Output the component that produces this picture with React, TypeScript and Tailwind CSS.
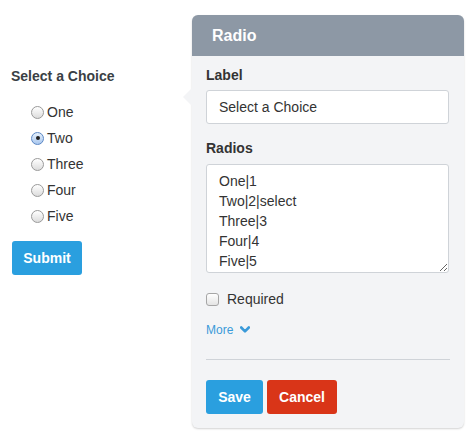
import { useState } from "react";

const options = ["One", "Two", "Three", "Four", "Five"];

function Radio({ checked }: { checked: boolean }) {
  return checked ? (
    <span className="flex h-[13px] w-[13px] items-center justify-center rounded-full border border-[#5b87c4] bg-gradient-to-b from-[#e6f0fb] to-[#a9c7ee]">
      <span className="h-[4px] w-[4px] rounded-full bg-[#1f1f1f]" />
    </span>
  ) : (
    <span className="h-[13px] w-[13px] rounded-full border border-[#9a9a9a] bg-gradient-to-b from-white to-[#dcdcdc]" />
  );
}

export default function App() {
  const [selected, setSelected] = useState("Two");

  return (
    <div
      className="flex items-start pt-[15px] text-[#333] bg-white w-[473px] h-[442px]"
      style={{ fontFamily: '"Liberation Sans", Arial, sans-serif' }}
    >
      {/* Preview */}
      <div className="w-[192px] pl-[11px] pt-[51px]">
        <div className="text-[14px] font-bold leading-[20px] text-[#3a3f45]">Select a Choice</div>
        <div className="mt-[13px] pl-[20px]">
          {options.map((o) => (
            <div
              key={o}
              onClick={() => setSelected(o)}
              className="flex h-[26px] items-center gap-[3px] text-[14px] cursor-pointer"
            >
              <Radio checked={selected === o} />
              <span>{o}</span>
            </div>
          ))}
        </div>
        <button className="ml-[1px] mt-[12px] h-[34px] w-[70px] rounded-[3px] bg-[#2a9fdf] text-[14px] font-bold text-white">
          Submit
        </button>
      </div>

      {/* Editor panel */}
      <div className="relative w-[272px] rounded-[6px] bg-[#f3f4f6] shadow-[0_1px_2px_rgba(0,0,0,0.18)]">
        <span className="absolute left-[-9px] top-[73px] h-0 w-0 border-y-[9px] border-r-[9px] border-y-transparent border-r-[#f3f4f6]" />
        <div className="flex h-[41px] items-center rounded-t-[6px] bg-[#8d98a5] pl-[20px] text-[16px] font-bold text-white">
          Radio
        </div>
        <div className="px-[14px] pb-[14px] pt-[9px]">
          <div className="text-[14px] font-bold leading-[20px]">Label</div>
          <input
            defaultValue="Select a Choice"
            className="mt-[5px] h-[34px] w-[243px] rounded-[3px] border border-[#cfd3d8] bg-white px-[12px] text-[14px] text-[#333] outline-none"
          />
          <div className="mt-[14px] text-[14px] font-bold leading-[20px]">Radios</div>
          <textarea
            defaultValue={"One|1\nTwo|2|select\nThree|3\nFour|4\nFive|5"}
            className="mt-[6px] block h-[109px] w-[243px] resize-y rounded-[3px] border border-[#cfd3d8] bg-white px-[12px] pt-[6px] text-[14px] leading-[20px] text-[#333] outline-none"
          />
          <label className="mt-[19px] flex items-center gap-[8px] text-[14px] leading-[14px]">
            <span className="h-[13px] w-[13px] rounded-[3px] border border-[#a6a6a6] bg-gradient-to-b from-white to-[#e4e4e4]" />
            Required
          </label>
          <div className="mt-[17px] flex items-center gap-[7px] text-[12px] leading-[14px] text-[#3a9ad9]">
            More
            <svg width="10" height="8" viewBox="0 0 10 8" fill="none">
              <path d="M1.2 1.5 5 5.3 8.8 1.5" stroke="#3a9ad9" strokeWidth="2.6" strokeLinecap="round" strokeLinejoin="round" />
            </svg>
          </div>
          <div className="mt-[22px] border-t border-[#cfd3d8]" />
          <div className="mt-[20px] flex gap-[4px]">
            <button className="h-[34px] w-[57px] rounded-[3px] bg-[#2a9fdf] text-[14px] font-bold text-white">Save</button>
            <button className="h-[34px] w-[70px] rounded-[3px] bg-[#d93518] text-[14px] font-bold text-white">Cancel</button>
          </div>
        </div>
      </div>
    </div>
  );
}
